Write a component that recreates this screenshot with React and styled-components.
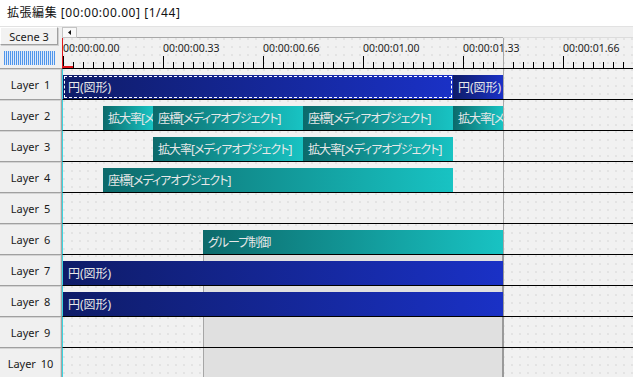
import React from "react";
import styled, { createGlobalStyle, css } from "styled-components";

const FRAME = 10;
const SCENE_END = 44;

const SCALE = "拡大率[メディアオブジェクト]";
const POS = "座標[メディアオブジェクト]";
const CIRCLE = "円(図形)";

const layers = [
  {
    id: 1,
    clips: [
      { from: 0, to: 39, kind: "shape", label: CIRCLE, selected: true },
      { from: 39, to: 44, kind: "shape", label: CIRCLE },
    ],
  },
  {
    id: 2,
    clips: [
      { from: 4, to: 9, kind: "filter", label: SCALE },
      { from: 9, to: 24, kind: "filter", label: POS },
      { from: 24, to: 39, kind: "filter", label: POS },
      { from: 39, to: 44, kind: "filter", label: SCALE },
    ],
  },
  {
    id: 3,
    clips: [
      { from: 9, to: 24, kind: "filter", label: SCALE },
      { from: 24, to: 39, kind: "filter", label: SCALE },
    ],
  },
  { id: 4, clips: [{ from: 4, to: 39, kind: "filter", label: POS }] },
  { id: 5, clips: [] },
  { id: 6, clips: [{ from: 14, to: 44, kind: "filter", label: "グループ制御" }] },
  { id: 7, group: true, clips: [{ from: 0, to: 44, kind: "shape", label: CIRCLE }] },
  { id: 8, group: true, clips: [{ from: 0, to: 44, kind: "shape", label: CIRCLE }] },
  { id: 9, group: true, clips: [] },
  { id: 10, group: true, clips: [] },
];

const marks = ["00:00:00.00", "00:00:00.33", "00:00:00.66", "00:00:01.00", "00:00:01.33", "00:00:01.66"];

const GlobalStyle = createGlobalStyle`
  html, body {
    margin: 0;
    padding: 0;
    background: #f0f0f0;
  }
  body {
    font-family: "Noto Sans", "Noto Sans CJK JP", sans-serif;
    font-size: 11px;
    color: #1a1a1a;
    overflow: hidden;
  }
`;

const dotted = css`
  background-color: #f1f1f1;
  background-image: radial-gradient(circle at 1px 1px, #dcdcdc 0.6px, transparent 0.9px);
  background-size: 8px 8px;
`;

const Window = styled.div`
  width: 633px;
  height: 377px;
  overflow: hidden;
  display: flex;
  flex-direction: column;
  background: #f0f0f0;
`;

const TitleBar = styled.div`
  flex: 0 0 27px;
  display: flex;
  align-items: center;
  padding: 0 0 2px 7px;
  box-sizing: border-box;
  background: #ffffff;
  border-bottom: 1px solid #e2e2e2;
  font-size: 12px;
  letter-spacing: 0.55px;
  color: #111;
`;

const TopRow = styled.div`
  display: flex;
  flex: 0 0 42px;
`;

const SceneControls = styled.div`
  flex: 0 0 62px;
  box-sizing: border-box;
  display: flex;
  flex-direction: column;
  border-bottom: 1px solid #a0a0a0;
`;

const SceneButton = styled.div`
  width: 58px;
  height: 18px;
  box-sizing: border-box;
  display: flex;
  align-items: center;
  justify-content: center;
  background: #f2f2f2;
  border: 1px solid;
  border-color: #ffffff #a0a0a0 #a0a0a0 #ffffff;
  box-shadow: 1px 1px 0 #d0d0d0;
  font-size: 11px;
`;

const HeightMeter = styled.div`
  width: 51px;
  height: 14px;
  margin: 6px 0 0 4px;
  background: repeating-linear-gradient(to right, #4f95ea 0 1px, #dce9fa 1px 2px);
`;

const TimeControls = styled.div`
  flex: 1;
  display: flex;
  flex-direction: column;
  min-width: 0;
`;

const ScrollBar = styled.div`
  flex: 0 0 11px;
  display: flex;
  background: #f0f0f0;
`;

const ArrowButton = styled.div`
  flex: 0 0 15px;
  box-sizing: border-box;
  display: flex;
  align-items: center;
  justify-content: center;
  background: #f9f9f9;
  border: 1px solid #c4c4c4;
`;

const Thumb = styled.div`
  flex: 0 0 426px;
  box-sizing: border-box;
  border-bottom: 1px solid #a8a8a8;
`;

const Track = styled.div`
  flex: 1;
  box-sizing: border-box;
  border-bottom: 1px solid #dcdcdc;
`;

const Ruler = styled.div`
  position: relative;
  flex: 0 0 31px;
  box-sizing: border-box;
  display: flex;
  overflow: hidden;
  border-left: 1px solid #e0161c;
  border-bottom: 1px solid #000;
  ${dotted}
`;

const RulerCell = styled.div`
  flex: 0 0 ${10 * FRAME}px;
  padding-top: 4px;
  font-size: 10.5px;
  line-height: 12px;
  color: #1c1c1c;
  background:
    linear-gradient(#000, #000) left bottom / 1px 12px no-repeat,
    repeating-linear-gradient(to right, #000 0 1px, transparent 1px ${FRAME}px) left bottom / 100% 6px no-repeat;
`;

const CursorFlag = styled.div`
  position: absolute;
  left: 0;
  bottom: 0;
  width: 10px;
  height: 2px;
  background: #e0161c;
`;

const SceneEnd = styled.div`
  position: absolute;
  top: 0;
  bottom: 0;
  left: ${SCENE_END * FRAME}px;
  width: 1px;
  background: ${(p) => (p.$dark ? "#9a9a9a" : "#a8a8a8")};
`;

const LayerRow = styled.div`
  display: flex;
  flex: 0 0 31px;
`;

const LayerHeader = styled.div`
  flex: 0 0 62px;
  box-sizing: border-box;
  display: flex;
  align-items: center;
  justify-content: center;
  background: #f0f0f0;
  border-right: 1px solid #a4a4a4;
  border-bottom: 1px solid #a0a0a0;
  box-shadow: inset 0 1px 0 #d4d4d4, inset -1px 0 0 #dadada;
  font-size: 11px;
  word-spacing: 2px;
  color: #1a1a1a;
`;

const LayerTrack = styled.div`
  position: relative;
  flex: 1;
  box-sizing: border-box;
  border-left: 1px solid #3ad4e0;
  border-bottom: 1px solid #000;
  ${dotted}
`;

const GroupShade = styled.div`
  position: absolute;
  top: 0;
  bottom: 0;
  box-sizing: border-box;
  background: #e0e0e0;
  border-left: 1px solid #a6a6a6;
  border-right: 1px solid #9a9a9a;
`;

const Clip = styled.div`
  position: absolute;
  top: 6px;
  bottom: 0;
  box-sizing: border-box;
  display: flex;
  align-items: center;
  padding-left: 5px;
  overflow: hidden;
  white-space: nowrap;
  color: #e8e8e8;
  font-size: 12px;
  font-feature-settings: "palt";
  background: ${(p) =>
    p.$kind === "shape"
      ? "linear-gradient(to right, #0f1c68, #1a31c6)"
      : "linear-gradient(to right, #0c6a6b, #18c3c3)"};
  ${(p) =>
    p.$kind === "filter" &&
    css`
      letter-spacing: -1px;
    `}
  ${(p) =>
    p.$selected &&
    css`
      outline: 1px dashed #ffffff;
      outline-offset: -2px;
    `}
`;

const frameBox = (from, to) => ({ left: from * FRAME, width: (to - from) * FRAME });

export default function App() {
  return (
    <Window>
      <GlobalStyle />
      <TitleBar>拡張編集 [00:00:00.00] [1/44]</TitleBar>

      <TopRow>
        <SceneControls>
          <SceneButton>Scene 3</SceneButton>
          <HeightMeter />
        </SceneControls>
        <TimeControls>
          <ScrollBar>
            <ArrowButton>
              <svg width="4" height="5" viewBox="0 0 4 5">
                <path d="M3 0 L0 2.5 L3 5 Z" fill="#111" />
              </svg>
            </ArrowButton>
            <Thumb />
            <Track />
          </ScrollBar>
          <Ruler>
            {marks.map((m) => (
              <RulerCell key={m}>{m}</RulerCell>
            ))}
            <SceneEnd />
            <CursorFlag />
          </Ruler>
        </TimeControls>
      </TopRow>

      {layers.map((layer) => (
        <LayerRow key={layer.id}>
          <LayerHeader>Layer {layer.id}</LayerHeader>
          <LayerTrack>
            {layer.group && <GroupShade style={frameBox(14, SCENE_END)} />}
            <SceneEnd $dark={layer.group} />
            {layer.clips.map((c, i) => (
              <Clip key={i} $kind={c.kind} $selected={c.selected} style={frameBox(c.from, c.to)}>
                {c.label}
              </Clip>
            ))}
          </LayerTrack>
        </LayerRow>
      ))}
    </Window>
  );
}
